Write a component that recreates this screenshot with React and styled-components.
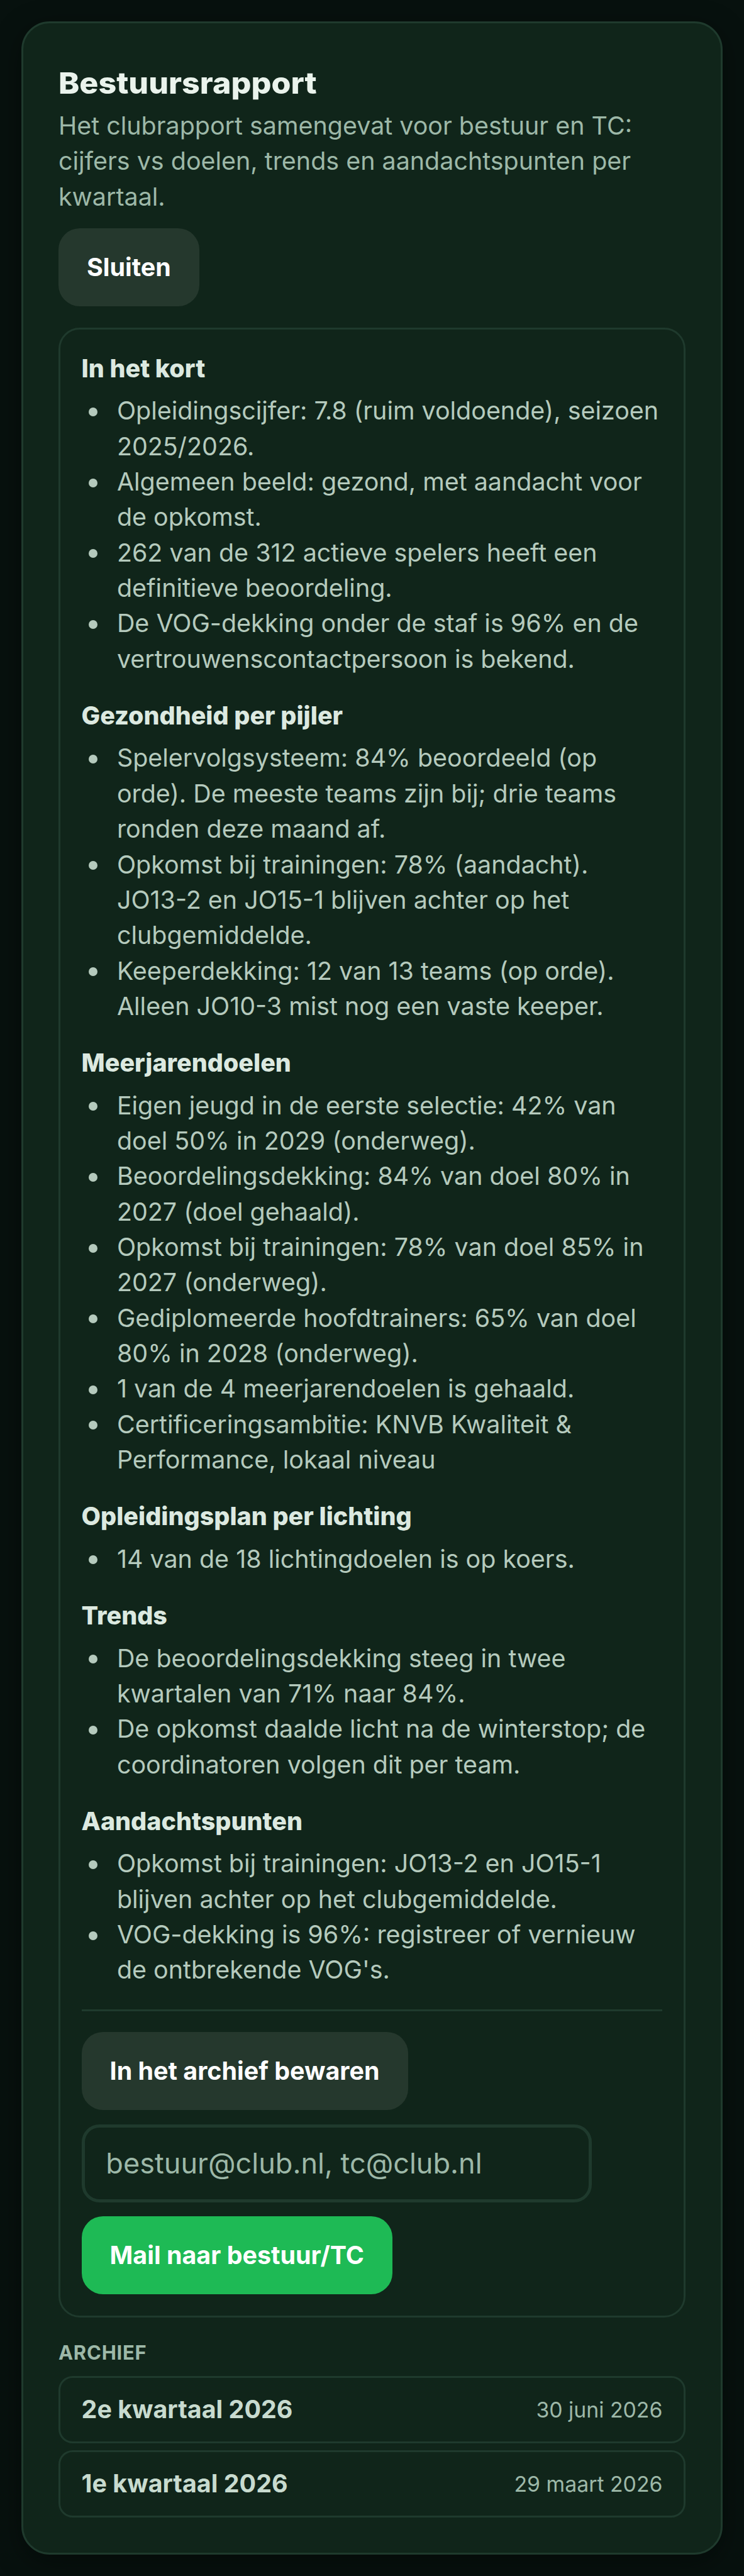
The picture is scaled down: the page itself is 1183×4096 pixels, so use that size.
import React, { useState } from "react";
import styled, { createGlobalStyle } from "styled-components";

// 1rem is 16 design pixels, shown at 2.817x
const GlobalStyle = createGlobalStyle`
    html {
        font-size: 45.07px;
        background-color: #07110e;
    }
    body {
        margin: 0;
        color: #b5cabd;
        font-family: "Inter", sans-serif;
        font-size: 0.875rem;
        line-height: 1.25rem;
    }
    *,
    *::before,
    *::after {
        box-sizing: border-box;
    }
`;

const Page = styled.main`
    padding: 0.75rem;
`;

const Card = styled.section`
    padding: calc(1.3125rem - 3px);
    border: 3px solid #1f3a2d;
    border-radius: 1rem;
    background-color: #10251a;
    box-shadow: 0 0.25rem 1rem rgba(0, 0, 0, 0.4);
`;

const Title = styled.h2`
    margin: 0;
    color: #eaf3ec;
    font-size: 1.05rem;
    font-weight: 800;
    line-height: 1.75rem;
    transform: scaleX(1.06);
    transform-origin: left center;
`;

const Intro = styled.p`
    margin: 0 0 0.5rem;
    color: #9db8a8;
`;

const Button = styled.button`
    display: block;
    height: 2.75rem;
    padding: 0 1rem;
    border: 0;
    border-radius: 0.75rem;
    background-color: ${(props) => props.$primary ? "#1eba55" : "#25382d"};
    color: white;
    font-family: inherit;
    font-size: 0.875rem;
    font-weight: 700;
    line-height: 1.25rem;
`;

const Report = styled.div`
    margin-top: 0.75rem;
    padding: calc(0.8125rem - 3px);
    border: 3px solid #1f3a2d;
    border-radius: 0.75rem;
`;

const Section = styled.div`
    margin-bottom: 0.75rem;
`;

const SectionTitle = styled.h3`
    margin: 0 0 0.25rem;
    color: #dce9e0;
    font-size: 0.875rem;
    font-weight: 800;
    line-height: 1.25rem;
`;

const List = styled.ul`
    margin: 0;
    padding-left: 0.25rem;
    list-style: none;
`;

const ListItem = styled.li`
    display: flex;
    gap: 0.6875rem;
    &::before {
        content: "";
        flex: none;
        width: 0.3125rem;
        height: 0.3125rem;
        margin-top: 0.5rem;
        border-radius: 50%;
        background-color: currentColor;
    }
`;

const Actions = styled.div`
    display: flex;
    flex-direction: column;
    align-items: flex-start;
    gap: 0.5rem;
    padding-top: calc(0.8125rem - 3px);
    border-top: 3px solid #1f3a2d;
`;

const MailInput = styled.input`
    width: 18rem;
    height: 2.75rem;
    padding: 0 0.75rem;
    border: 0.125rem solid #1f3a2d;
    border-radius: 0.625rem;
    outline: none;
    background-color: transparent;
    color: #eaf3ec;
    font-family: inherit;
    font-size: 1rem;
    &::placeholder {
        color: #9db8a8;
        opacity: 1;
    }
`;

const ArchiveTitle = styled.h4`
    margin: 0.75rem 0 0.3125rem;
    color: #9db8a8;
    font-size: 0.6875rem;
    font-weight: 700;
    line-height: 1rem;
    letter-spacing: 0.025em;
    text-transform: uppercase;
`;

const ArchiveList = styled.div`
    display: flex;
    flex-direction: column;
    gap: 0.25rem;
`;

const ArchiveRow = styled.div`
    display: flex;
    align-items: center;
    justify-content: space-between;
    height: 2.375rem;
    padding: 0 calc(0.8125rem - 3px);
    border: 3px solid #1f3a2d;
    border-radius: 0.5rem;
`;

const Quarter = styled.span`
    color: #c8dbcf;
    font-weight: 700;
`;

const SavedOn = styled.span`
    color: #9db8a8;
    font-size: 0.75rem;
    line-height: 1rem;
`;

const sections = [
    {
        title: "In het kort",
        items: [
            "Opleidingscijfer: 7.8 (ruim voldoende), seizoen 2025/2026.",
            "Algemeen beeld: gezond, met aandacht voor de opkomst.",
            "262 van de 312 actieve spelers heeft een definitieve beoordeling.",
            "De VOG-dekking onder de staf is 96% en de vertrouwenscontactpersoon is bekend.",
        ],
    },
    {
        title: "Gezondheid per pijler",
        items: [
            "Spelervolgsysteem: 84% beoordeeld (op orde). De meeste teams zijn bij; drie teams ronden deze maand af.",
            "Opkomst bij trainingen: 78% (aandacht). JO13-2 en JO15-1 blijven achter op het clubgemiddelde.",
            "Keeperdekking: 12 van 13 teams (op orde). Alleen JO10-3 mist nog een vaste keeper.",
        ],
    },
    {
        title: "Meerjarendoelen",
        items: [
            "Eigen jeugd in de eerste selectie: 42% van doel 50% in 2029 (onderweg).",
            "Beoordelingsdekking: 84% van doel 80% in 2027 (doel gehaald).",
            "Opkomst bij trainingen: 78% van doel 85% in 2027 (onderweg).",
            "Gediplomeerde hoofdtrainers: 65% van doel 80% in 2028 (onderweg).",
            "1 van de 4 meerjarendoelen is gehaald.",
            "Certificeringsambitie: KNVB Kwaliteit & Performance, lokaal niveau",
        ],
    },
    {
        title: "Opleidingsplan per lichting",
        items: ["14 van de 18 lichtingdoelen is op koers."],
    },
    {
        title: "Trends",
        items: [
            "De beoordelingsdekking steeg in twee kwartalen van 71% naar 84%.",
            "De opkomst daalde licht na de winterstop; de coordinatoren volgen dit per team.",
        ],
    },
    {
        title: "Aandachtspunten",
        items: [
            "Opkomst bij trainingen: JO13-2 en JO15-1 blijven achter op het clubgemiddelde.",
            "VOG-dekking is 96%: registreer of vernieuw de ontbrekende VOG's.",
        ],
    },
];

const archive = [
    { quarter: "2e kwartaal 2026", savedOn: "30 juni 2026" },
    { quarter: "1e kwartaal 2026", savedOn: "29 maart 2026" },
];

function ReportSection(props) {
    const { title, items } = props;

    return (
        <Section>
            <SectionTitle>{title}</SectionTitle>
            <List>
                {
                    items.map((item) => <ListItem key={item}>{item}</ListItem>)
                }
            </List>
        </Section>
    );
}

function App() {
    const [recipients, setRecipients] = useState("");

    return (
        <Page>
            <GlobalStyle />
            <Card>
                <Title>Bestuursrapport</Title>
                <Intro>
                    Het clubrapport samengevat voor bestuur en TC: cijfers vs doelen, trends en aandachtspunten per kwartaal.
                </Intro>
                <Button>Sluiten</Button>
                <Report>
                    {
                        sections.map((section) => (
                            <ReportSection
                                key={section.title}
                                title={section.title}
                                items={section.items}
                            />
                        ))
                    }
                    <Actions>
                        <Button>In het archief bewaren</Button>
                        <MailInput
                            value={recipients}
                            placeholder="bestuur@club.nl, tc@club.nl"
                            onChange={(e) => setRecipients(e.target.value)}
                        />
                        <Button $primary>Mail naar bestuur/TC</Button>
                    </Actions>
                </Report>
                <ArchiveTitle>Archief</ArchiveTitle>
                <ArchiveList>
                    {
                        archive.map((item) => (
                            <ArchiveRow key={item.quarter}>
                                <Quarter>{item.quarter}</Quarter>
                                <SavedOn>{item.savedOn}</SavedOn>
                            </ArchiveRow>
                        ))
                    }
                </ArchiveList>
            </Card>
        </Page>
    );
}

export default App;
